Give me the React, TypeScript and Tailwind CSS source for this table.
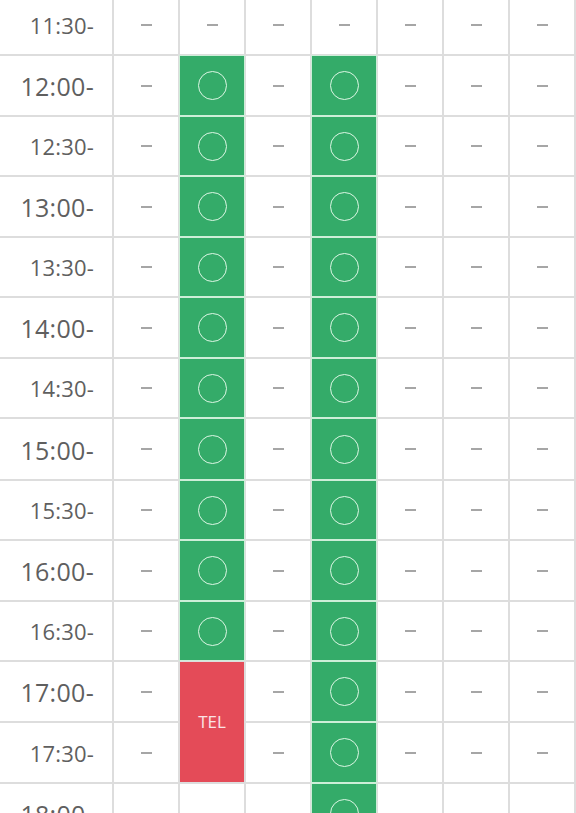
import React from "react";

type Cell = "dash" | "ok" | "tel" | "empty" | "skip";

interface Row {
  time: string;
  h: number;
  cells: Cell[];
}

const D: Cell = "dash";
const O: Cell = "ok";

// row heights measured from the screenshot (content only, 2px line between rows)
const rows: Row[] = [
  { time: "11:30-", h: 58, cells: [D, D, D, D, D, D, D] },
  { time: "12:00-", h: 59, cells: [D, O, D, O, D, D, D] },
  { time: "12:30-", h: 58, cells: [D, O, D, O, D, D, D] },
  { time: "13:00-", h: 59, cells: [D, O, D, O, D, D, D] },
  { time: "13:30-", h: 58, cells: [D, O, D, O, D, D, D] },
  { time: "14:00-", h: 59, cells: [D, O, D, O, D, D, D] },
  { time: "14:30-", h: 58, cells: [D, O, D, O, D, D, D] },
  { time: "15:00-", h: 60, cells: [D, O, D, O, D, D, D] },
  { time: "15:30-", h: 58, cells: [D, O, D, O, D, D, D] },
  { time: "16:00-", h: 59, cells: [D, O, D, O, D, D, D] },
  { time: "16:30-", h: 58, cells: [D, O, D, O, D, D, D] },
  { time: "17:00-", h: 59, cells: [D, "tel", D, O, D, D, D] },
  { time: "17:30-", h: 59, cells: [D, "skip", D, O, D, D, D] },
  { time: "18:00-", h: 59, cells: [D, "empty", D, O, D, D, D] },
  { time: "18:30-", h: 58, cells: [D, "empty", D, O, D, D, D] },
];

const Dash = () => <div className="w-[11px] h-[2px] bg-[#a6a6a6]" />;

const SlotCell = ({ type }: { type: Cell }) => {
  if (type === "skip") return null;
  if (type === "ok") {
    return (
      <div className="bg-[#34ab69] flex items-center justify-center shadow-[0_0_0_1px_#cdeed8]">
        <div className="w-[29px] h-[29px] rounded-full border-[1.5px] border-[#dcf7e4]" />
      </div>
    );
  }
  if (type === "tel") {
    return (
      <div className="row-span-2 bg-[#e44b58] flex items-center justify-center">
        <span className="text-[17px] text-[#fbe3e5]">TEL</span>
      </div>
    );
  }
  if (type === "empty") return <div className="bg-white" />;
  return (
    <div className="bg-white flex items-center justify-center">
      <Dash />
    </div>
  );
};

export default function App() {
  return (
    <div
      className="w-[576px] h-[813px] overflow-hidden bg-white"
      style={{ fontFamily: '"Open Sans", "Noto Sans", sans-serif' }}
    >
      <div className="-mt-[6px] grid grid-cols-[112px_repeat(7,64px)] gap-[2px] pr-[2px] pt-[2px] bg-[#dddddd]">
        {rows.map((row) => {
          const hour = row.time.includes(":00");
          return (
            <React.Fragment key={row.time}>
              <div
                className={`bg-white flex items-center justify-end pr-[18px] text-[#5f5f5f] ${
                  hour ? "text-[25px] tracking-[0.3px] pt-[3px]" : "text-[22px] tracking-[0.2px] pt-[1px]"
                }`}
                style={{ height: row.h }}
              >
                {row.time}
              </div>
              {row.cells.map((c, i) => (
                <SlotCell key={i} type={c} />
              ))}
            </React.Fragment>
          );
        })}
      </div>
    </div>
  );
}
